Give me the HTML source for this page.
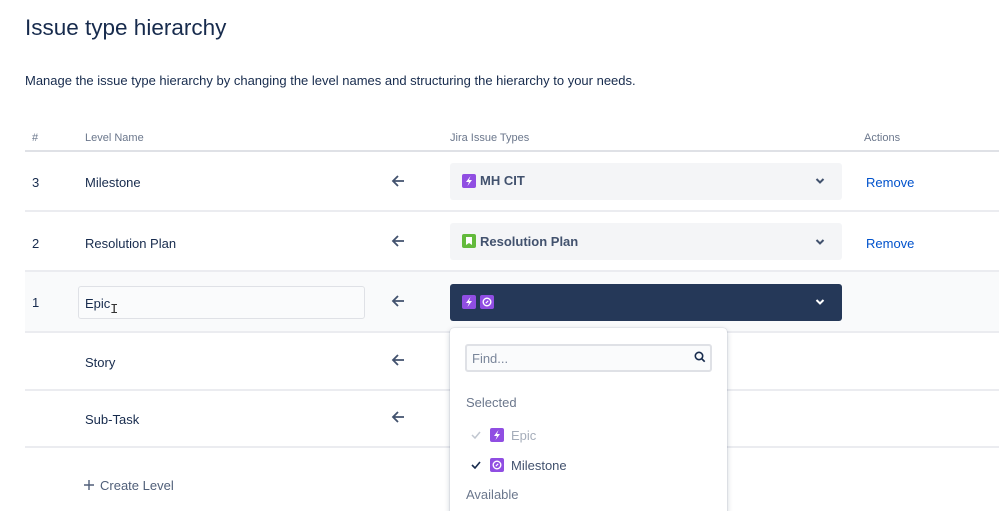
<!DOCTYPE html>
<html><head><meta charset="utf-8"><style>
*{box-sizing:border-box;margin:0;padding:0}
html,body{width:999px;height:511px;overflow:hidden}
body{background:#fff;font-family:"Liberation Sans",sans-serif;color:#172b4d;position:relative}
.a{position:absolute;white-space:nowrap}
.line{position:absolute;left:25px;right:0;height:2px;background:#ebecf0}
.sel{position:absolute;left:450px;width:392px;height:37px;background:#f4f5f7;border-radius:3px}
.ico{position:absolute;width:14px;height:14px;border-radius:2px;background:#904ee2}
.arrow{position:absolute;left:391px}
.chev{position:absolute;left:814px}
.rm{position:absolute;left:866px;color:#0052cc;font-size:13px}
.lvl{font-size:13px;color:#172b4d}
</style></head><body>
<div class="a" style="left:25px;top:15px;font-size:22.5px;color:#172b4d">Issue type hierarchy</div>
<div class="a" style="left:25px;top:73px;font-size:13px;color:#172b4d">Manage the issue type hierarchy by changing the level names and structuring the hierarchy to your needs.</div>

<div class="a" style="left:32px;top:132px;font-size:11px;color:#6b778c">#</div>
<div class="a" style="left:85px;top:132px;font-size:11px;color:#6b778c">Level Name</div>
<div class="a" style="left:450px;top:132px;font-size:11px;color:#6b778c">Jira Issue Types</div>
<div class="a" style="left:864px;top:132px;font-size:11px;color:#6b778c">Actions</div>
<div class="line" style="top:150px;background:#dfe1e6"></div>

<div style="position:absolute;left:25px;right:0;top:272px;height:60px;background:#f9fafb"></div>
<div class="line" style="top:210px"></div>
<div class="line" style="top:270px"></div>
<div class="line" style="top:331px"></div>
<div class="line" style="top:389px"></div>
<div class="line" style="top:446px"></div>

<!-- row 3 -->
<div class="a lvl" style="left:32px;top:175px">3</div>
<div class="a lvl" style="left:85px;top:175px">Milestone</div>
<svg class="arrow" style="top:174px" width="14" height="14" viewBox="0 0 14 14"><path d="M13 7H2M7 2L2 7l5 5" stroke="#42526e" stroke-width="1.8" fill="none"/></svg>
<div class="sel" style="top:163px"></div>
<div class="ico" style="left:462px;top:174px"></div>
<svg class="a" style="left:462px;top:174px" width="14" height="14" viewBox="0 0 14 14"><path d="M8.5 2L4 8h3l-1.5 4L10 6H7z" fill="#fff"/></svg>
<div class="a" style="left:480px;top:173px;font-size:13px;font-weight:bold;color:#42526e">MH CIT</div>
<svg class="chev" style="top:177px" width="12" height="8" viewBox="0 0 12 8"><path d="M2.5 2l3.5 3.5L9.5 2" stroke="#42526e" stroke-width="2" fill="none"/></svg>
<div class="rm" style="top:175px">Remove</div>

<!-- row 2 -->
<div class="a lvl" style="left:32px;top:236px">2</div>
<div class="a lvl" style="left:85px;top:236px">Resolution Plan</div>
<svg class="arrow" style="top:234px" width="14" height="14" viewBox="0 0 14 14"><path d="M13 7H2M7 2L2 7l5 5" stroke="#42526e" stroke-width="1.8" fill="none"/></svg>
<div class="sel" style="top:223px"></div>
<div class="ico" style="left:462px;top:234px;background:#63ba3c"></div>
<svg class="a" style="left:462px;top:234px" width="14" height="14" viewBox="0 0 14 14"><path d="M4 3h6v8l-3-2-3 2z" fill="#fff"/></svg>
<div class="a" style="left:480px;top:234px;font-size:13px;font-weight:bold;color:#42526e">Resolution Plan</div>
<svg class="chev" style="top:238px" width="12" height="8" viewBox="0 0 12 8"><path d="M2.5 2l3.5 3.5L9.5 2" stroke="#42526e" stroke-width="2" fill="none"/></svg>
<div class="rm" style="top:236px">Remove</div>

<!-- row 1 -->
<div class="a lvl" style="left:32px;top:295px">1</div>
<div class="a" style="left:78px;top:286px;width:287px;height:33px;border:1px solid #dfe1e6;border-radius:3px;background:#fafbfc"></div>
<div class="a lvl" style="left:85px;top:296px">Epic</div>
<div class="a" style="left:110px;top:302px;font-size:14px;color:#333;font-family:'Liberation Mono',monospace">I</div>
<svg class="arrow" style="top:294px" width="14" height="14" viewBox="0 0 14 14"><path d="M13 7H2M7 2L2 7l5 5" stroke="#42526e" stroke-width="1.8" fill="none"/></svg>
<div class="sel" style="top:284px;background:#253858"></div>
<div class="ico" style="left:462px;top:295px"></div>
<svg class="a" style="left:462px;top:295px" width="14" height="14" viewBox="0 0 14 14"><path d="M8.5 2L4 8h3l-1.5 4L10 6H7z" fill="#fff"/></svg>
<div class="ico" style="left:480px;top:295px"></div>
<svg class="a" style="left:480px;top:295px" width="14" height="14" viewBox="0 0 14 14"><circle cx="7" cy="7" r="3.8" stroke="#fff" stroke-width="1.4" fill="none"/><path d="M5.8 8.2l2.4-2.4" stroke="#fff" stroke-width="1.2"/></svg>
<svg class="chev" style="top:298px" width="12" height="8" viewBox="0 0 12 8"><path d="M2.5 2l3.5 3.5L9.5 2" stroke="#fff" stroke-width="2" fill="none"/></svg>

<div class="a lvl" style="left:85px;top:355px">Story</div>
<svg class="arrow" style="top:353px" width="14" height="14" viewBox="0 0 14 14"><path d="M13 7H2M7 2L2 7l5 5" stroke="#42526e" stroke-width="1.8" fill="none"/></svg>
<div class="a lvl" style="left:85px;top:412px">Sub-Task</div>
<svg class="arrow" style="top:410px" width="14" height="14" viewBox="0 0 14 14"><path d="M13 7H2M7 2L2 7l5 5" stroke="#42526e" stroke-width="1.8" fill="none"/></svg>

<svg class="a" style="left:83px;top:479px" width="12" height="12" viewBox="0 0 12 12"><path d="M6 1v10M1 6h10" stroke="#505f79" stroke-width="1.4"/></svg>
<div class="a" style="left:100px;top:478px;font-size:13px;color:#505f79">Create Level</div>

<!-- dropdown -->
<div class="a" style="left:450px;top:328px;width:277px;height:190px;background:#fff;border-radius:4px;box-shadow:0 2px 6px rgba(9,30,66,.22),0 0 1px rgba(9,30,66,.3)"></div>
<div class="a" style="left:465px;top:344px;width:247px;height:28px;border:2px solid #dfe1e6;border-radius:3px;background:#fafbfc"></div>
<div class="a" style="left:472px;top:351px;font-size:13px;color:#7a869a">Find...</div>
<svg class="a" style="left:694px;top:351px" width="12" height="12" viewBox="0 0 12 12"><circle cx="5" cy="5" r="3.7" stroke="#172b4d" stroke-width="1.6" fill="none"/><path d="M7.7 7.7l3 3" stroke="#172b4d" stroke-width="1.7"/></svg>
<div class="a" style="left:466px;top:395px;font-size:13px;color:#6b778c">Selected</div>
<svg class="a" style="left:471px;top:431px" width="10" height="8" viewBox="0 0 10 8"><path d="M1 4l3 3 5-6" stroke="#c1c7d0" stroke-width="1.5" fill="none"/></svg>
<div class="ico" style="left:490px;top:428px"></div>
<svg class="a" style="left:490px;top:428px" width="14" height="14" viewBox="0 0 14 14"><path d="M8.5 2L4 8h3l-1.5 4L10 6H7z" fill="#fff"/></svg>
<div class="a" style="left:511px;top:428px;font-size:13px;color:#a5adba">Epic</div>
<svg class="a" style="left:471px;top:461px" width="10" height="8" viewBox="0 0 10 8"><path d="M1 4l3 3 5-6" stroke="#172b4d" stroke-width="1.6" fill="none"/></svg>
<div class="ico" style="left:490px;top:458px"></div>
<svg class="a" style="left:490px;top:458px" width="14" height="14" viewBox="0 0 14 14"><circle cx="7" cy="7" r="3.8" stroke="#fff" stroke-width="1.4" fill="none"/><path d="M5.8 8.2l2.4-2.4" stroke="#fff" stroke-width="1.2"/></svg>
<div class="a" style="left:511px;top:458px;font-size:13px;color:#42526e">Milestone</div>
<div class="a" style="left:466px;top:487px;font-size:13px;color:#6b778c">Available</div>
</body></html>
